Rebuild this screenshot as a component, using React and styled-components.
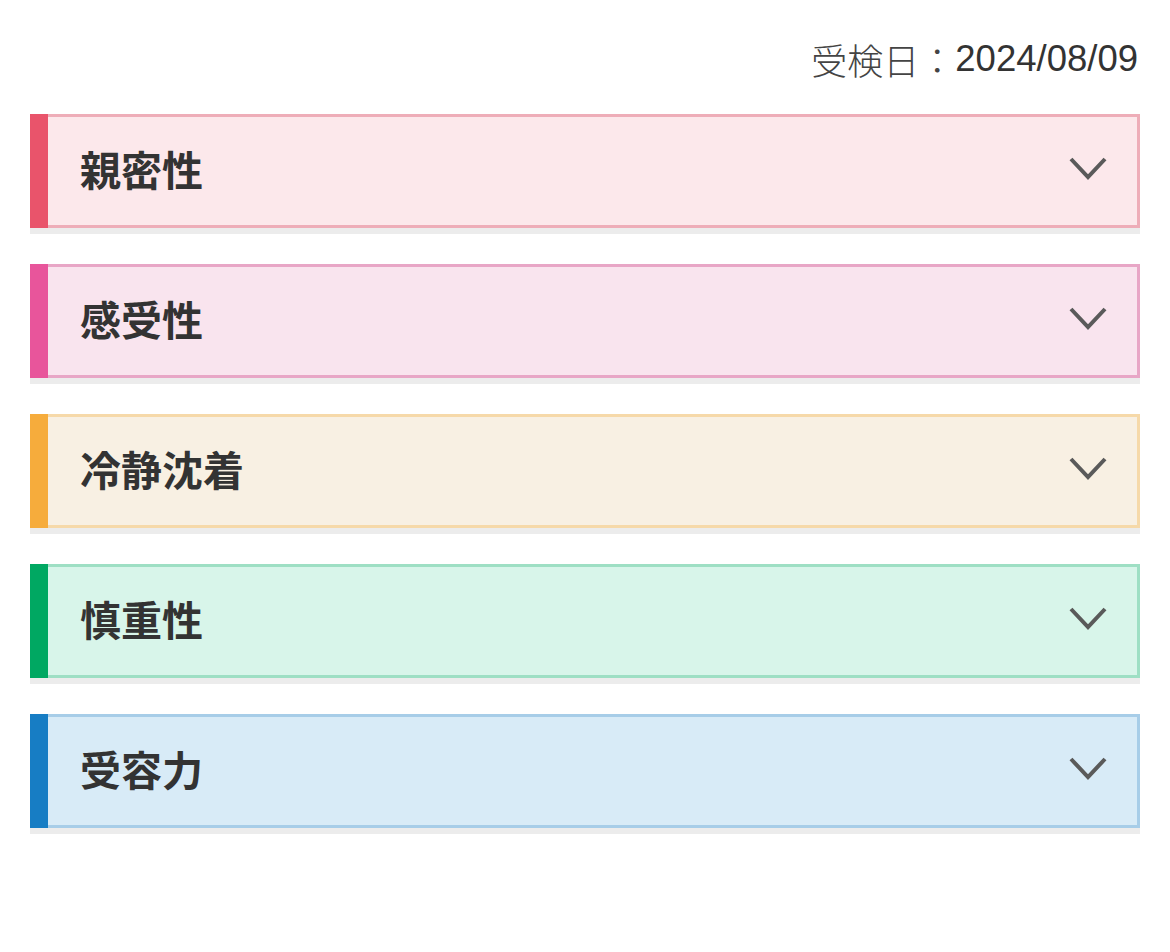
import React from "react";
import styled, { createGlobalStyle } from "styled-components";

const GlobalStyle = createGlobalStyle`
  html, body { margin: 0; padding: 0; background: #fff; }
  body { font-family: "Liberation Sans", Arial, "Noto Sans CJK JP", sans-serif; }
`;

const Page = styled.div`
  padding: 40px 30px 0;
  box-sizing: border-box;
  width: 1170px;
`;

const DateLine = styled.div`
  display: flex;
  justify-content: flex-end;
  align-items: center;
  height: 38px;
  font-size: 36.5px;
  line-height: 38px;
  color: #333;
  padding-right: 2px;
  margin-bottom: 36px;
  font-family: "Liberation Sans", Arial, "Noto Sans CJK JP", sans-serif;
`;

const DateLabel = styled.span`
  color: #444;
  font-family: "Noto Sans CJK JP", sans-serif;
  font-weight: 300;
  font-size: 36px;
`;

const DateValue = styled.span`
  font-family: "Liberation Sans", Arial, sans-serif;
`;

const List = styled.div`
  display: flex;
  flex-direction: column;
  gap: 30px;
`;

const Item = styled.div`
  display: flex;
  border-bottom: 6px solid #ececec;
`;

const Bar = styled.div`
  width: 18px;
  flex: none;
  background: ${(p) => p.$bar};
`;

const Header = styled.div`
  flex: 1;
  height: 114px;
  box-sizing: border-box;
  display: flex;
  align-items: center;
  justify-content: space-between;
  background: ${(p) => p.$bg};
  border: 3px solid ${(p) => p.$border};
  border-left: none;
  padding: 0 30px 0 32px;
`;

const Title = styled.h2`
  margin: 0 0 6px;
  font-family: "Noto Sans CJK JP", sans-serif;
  font-weight: 700;
  font-size: 41px;
  line-height: 1;
  color: #333;
`;

const ChevronIcon = styled.svg`
  margin-bottom: 4px;
  flex: none;
`;

const Chevron = () => (
  <ChevronIcon width="38" height="26" viewBox="0 0 38 26">
    <polyline
      points="2,3 19,21 36,3"
      fill="none"
      stroke="#5a5a5a"
      strokeWidth="4"
    />
  </ChevronIcon>
);

const items = [
  { title: "親密性", bar: "#e9546b", bg: "#fce8eb", border: "#eeadb8" },
  { title: "感受性", bar: "#e8559b", bg: "#f9e4ee", border: "#e8a6c6" },
  { title: "冷静沈着", bar: "#f6ac3c", bg: "#f8f0e3", border: "#f6d9a9" },
  { title: "慎重性", bar: "#00a862", bg: "#d8f5ea", border: "#9edfc4" },
  { title: "受容力", bar: "#177dc4", bg: "#d8ebf7", border: "#a7cde8" },
];

export default function App() {
  return (
    <>
      <GlobalStyle />
      <Page>
        <DateLine>
          <DateLabel>受検日：</DateLabel>
          <DateValue>2024/08/09</DateValue>
        </DateLine>
        <List>
          {items.map((it) => (
            <Item key={it.title}>
              <Bar $bar={it.bar} />
              <Header $bg={it.bg} $border={it.border}>
                <Title>{it.title}</Title>
                <Chevron />
              </Header>
            </Item>
          ))}
        </List>
      </Page>
    </>
  );
}
